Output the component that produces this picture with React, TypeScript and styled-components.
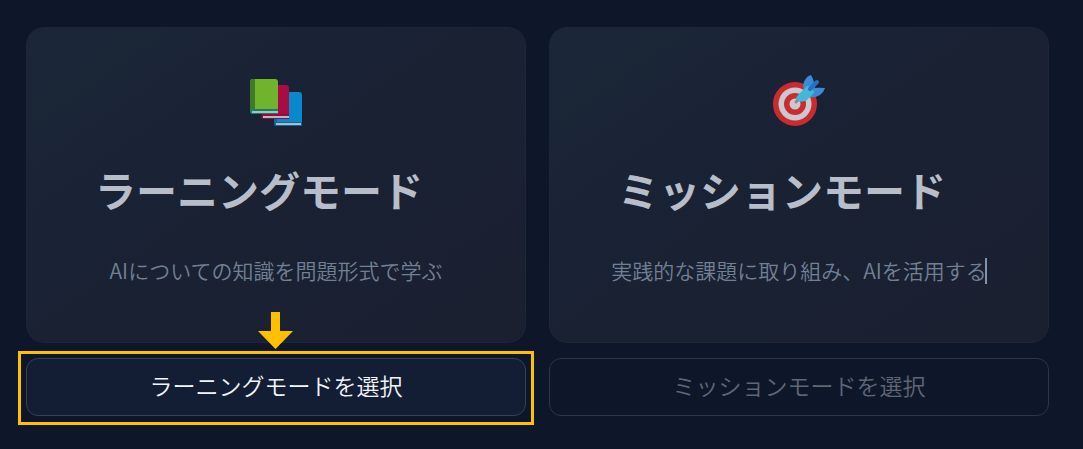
import React from 'react';
import styled, { createGlobalStyle } from 'styled-components';

const GlobalStyle = createGlobalStyle`
  * { box-sizing: border-box; }
  body {
    margin: 0;
    background: #0e1729;
    font-family: "Noto Sans CJK JP", "Noto Sans", sans-serif;
  }
`;

const Page = styled.main`
  display: grid;
  grid-template-columns: 1fr 1fr;
  gap: 23px;
  padding: 27px 34px 33px 26px;
`;

const Mode = styled.section`
  display: flex;
  flex-direction: column;
  gap: 15px;
`;

const Card = styled.div`
  display: flex;
  flex-direction: column;
  align-items: center;
  padding: 47px 24px 58px;
  border: 1px solid #1c2637;
  border-radius: 18px;
  background: linear-gradient(145deg, #1b2738 0%, #192133 50%, #1b2030 100%);
`;

const Icon = styled.svg`
  display: block;
  width: 52px;
  height: 52px;
`;

const Title = styled.h2`
  margin: 32px 0 0;
  padding-right: 34px;
  color: #b7bdc9;
  font-size: 41px;
  font-weight: 700;
  line-height: 61px;
  white-space: nowrap;
`;

const Description = styled.p`
  margin: 36px 0 0;
  color: #728095;
  font-size: 21px;
  font-weight: 350;
  line-height: 28px;
  white-space: nowrap;
`;

const Caret = styled.span`
  display: inline-block;
  width: 2px;
  height: 26px;
  margin-left: -2px;
  vertical-align: bottom;
  background: #7f93ad;
`;

const Action = styled.div`
  position: relative;
`;

const SelectButton = styled.button<{ $active?: boolean }>`
  display: block;
  width: 100%;
  padding: 10px 16px 14px;
  border: 1px solid ${(p) => (p.$active ? '#364154' : '#2d3648')};
  border-radius: 12px;
  background: ${(p) => (p.$active ? '#131d33' : 'transparent')};
  color: ${(p) => (p.$active ? '#f1f4f9' : '#5f6675')};
  font-family: inherit;
  font-size: 23px;
  font-weight: 350;
  line-height: 32px;
`;

const Highlight = styled.div`
  position: absolute;
  inset: -7px -8px -9px;
  border: 3px solid #ffc000;
  pointer-events: none;
`;

const Arrow = styled.svg`
  position: absolute;
  bottom: calc(100% + 9px);
  left: calc(50% - 18px);
  width: 35px;
  height: 37px;
  pointer-events: none;
`;

const Books = () => (
  <Icon viewBox="0 0 52 52" aria-hidden="true">
    <path d="M24 20q0-3 3-3h22q3 0 3 3v27q0 1-1 1v3H27q-3 0-3-3z" fill="#0789cb" />
    <path d="M24 20h3v27q-2 0-3 2z" fill="#056cab" />
    <path d="M27 47h25v4H27q-3 0-3-2t3-2z" fill="#0569a7" />
    <path d="M26 48h25v2H26z" fill="#b9b8bf" />
    <path d="M12 13q0-3 3-3h21q3 0 3 3v31H15q-3 0-3-3z" fill="#a70c43" />
    <path d="M12 13h4v26q-3 0-4 2z" fill="#7e0c37" />
    <path d="M14 39h25v5H14q-3 0-3-2t3-3z" fill="#950b3c" />
    <path d="M13 41h26v2H13z" fill="#b9b8bf" />
    <path d="M0 7q0-3 3-3h22q3 0 3 3v31H3q-3 0-3-3z" fill="#70b42d" />
    <path d="M0 7q0-3 3-3h2v30q-3 0-5 2z" fill="#40792a" />
    <path d="M3 34h25v5H3q-3 0-3-2t3-3z" fill="#11826a" />
    <path d="M2 36h26v2H2z" fill="#b9b8bf" />
  </Icon>
);

const Target = () => (
  <Icon viewBox="0 0 52 52" aria-hidden="true">
    <circle cx="22" cy="29" r="22" fill="#cb2b2f" />
    <circle cx="22" cy="29" r="16.5" fill="#c8cad0" />
    <circle cx="22" cy="29" r="11" fill="#cb2b2f" />
    <circle cx="22" cy="29" r="5.5" fill="#c8cad0" />
    <path d="M23 27l4-4" stroke="#858b95" strokeWidth="3" strokeLinecap="round" />
    <path d="M31 15q-2-6 1-10 2-4 6-5 3 5 4 13l-5 8z" fill="#3a8bd6" />
    <path d="M37 14q6-2 15-1-1 4-5 7-5 3-11 2z" fill="#3a8bd6" />
    <path d="M25 20l8-8q2-2 4 0l3 3q2 2 0 4l-6 6q-5 3-9 1-4-2 0-6z" fill="#43b7d8" />
    <path d="M37 14l7-7" stroke="#276fc0" strokeWidth="4" strokeLinecap="round" />
  </Icon>
);

export default function App() {
  return (
    <>
      <GlobalStyle />
      <Page>
        <Mode>
          <Card>
            <Books />
            <Title>ラーニングモード</Title>
            <Description>AIについての知識を問題形式で学ぶ</Description>
          </Card>
          <Action>
            <SelectButton type="button" $active>ラーニングモードを選択</SelectButton>
            <Highlight />
            <Arrow viewBox="0 0 35 37" aria-hidden="true">
              <path d="M13 0h9v19h13L17.5 37 0 19h13z" fill="#ffc000" />
            </Arrow>
          </Action>
        </Mode>
        <Mode>
          <Card>
            <Target />
            <Title>ミッションモード</Title>
            <Description>
              実践的な課題に取り組み、AIを活用する<Caret />
            </Description>
          </Card>
          <Action>
            <SelectButton type="button">ミッションモードを選択</SelectButton>
          </Action>
        </Mode>
      </Page>
    </>
  );
}
